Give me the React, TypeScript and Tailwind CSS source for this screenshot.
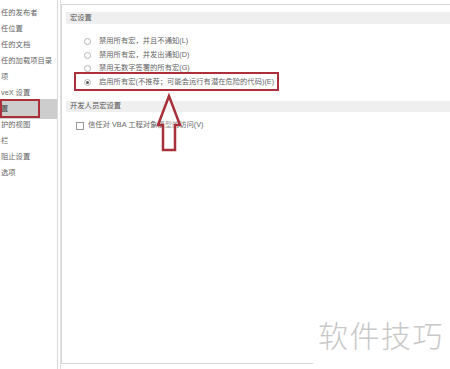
import React from "react";

const sideItems = [
  "任的发布者",
  "任位置",
  "任的文档",
  "任的加载项目录",
  "项",
  "veX 设置",
  "置",
  "护的视图",
  "栏",
  "阻止设置",
  "选项",
];

const radios = [
  { label: "禁用所有宏，并且不通知(L)", on: false },
  { label: "禁用所有宏，并发出通知(D)", on: false },
  { label: "禁用无数字签署的所有宏(G)", on: false },
  { label: "启用所有宏(不推荐；可能会运行有潜在危险的代码)(E)", on: true },
];

export default function App() {
  return (
    <div className="relative flex h-[369px] w-[450px] overflow-hidden bg-white font-['Liberation_Sans','Noto_Sans_CJK_SC',sans-serif] text-[7.3px] text-[#666]">
      {/* left nav */}
      <div className="w-[58px] shrink-0 border-r border-[#dadada] pt-[5px]">
        {sideItems.map((t, i) =>
          i === 6 ? (
            <div
              key={t}
              className="relative -my-[2px] flex h-[20px] items-center bg-[#cdcdcd] pl-[1px] text-[#444]"
            >
              {t}
              <div className="absolute left-0 top-0 h-[19px] w-[40px] border-2 border-[#ad2f3c]" />
            </div>
          ) : (
            <div key={t} className="flex h-[16px] items-center whitespace-nowrap pl-[1px]">
              {t}
            </div>
          )
        )}
      </div>
      <div className="w-[3px] shrink-0 border-r border-[#e2e2e2]" />

      {/* right panel */}
      <div className="mt-[4px] h-[360px] flex-1 border-l border-t border-b border-[#d6d6d6] pl-[4px] pt-[7px]">
        <div className="flex h-[12px] items-center bg-[#efefef] pl-[4px] text-[#555]">宏设置</div>
        <div className="mt-[11px]">
          {radios.map((r) => (
            <div key={r.label} className="flex h-[13.5px] items-center gap-[8px] pl-[18px]">
              <span className="flex h-[7px] w-[7px] items-center justify-center rounded-full border border-[#b5b5b5] bg-white">
                {r.on && <span className="h-[3px] w-[3px] rounded-full bg-[#555]" />}
              </span>
              <span className="whitespace-nowrap">{r.label}</span>
            </div>
          ))}
        </div>
        <div className="mt-[12px] flex h-[11px] items-center bg-[#efefef] pl-[4px] text-[#555]">
          开发人员宏设置
        </div>
        <div className="mt-[7px] flex h-[13px] items-center gap-[4px] pl-[10px]">
          <span className="h-[8px] w-[8px] border border-[#999] bg-white" />
          <span className="whitespace-nowrap">信任对 VBA 工程对象模型的访问(V)</span>
        </div>
      </div>

      {/* annotation: red box */}
      <div className="absolute left-[74px] top-[72px] h-[19px] w-[205px] border-2 border-[#ad2f3c]" />

      {/* annotation: arrow */}
      <svg className="absolute left-0 top-0" width="450" height="369" viewBox="0 0 450 369">
        <polygon
          points="169,96 158,125 163,125 163,150 175,150 175,125 180,125"
          fill="white"
          fillOpacity="0.35"
          stroke="#a8303b"
          strokeWidth="2.5"
          strokeLinejoin="miter"
        />
      </svg>

      {/* watermark */}
      <div className="absolute bottom-0 right-0 flex h-[58px] w-[137px] items-start justify-end bg-white pr-[6px] pt-[8px] font-['Noto_Sans_CJK_SC',sans-serif] text-[30px] font-light leading-none tracking-[1.5px] text-[#c8c8c8]">
        软件技巧
      </div>
    </div>
  );
}
